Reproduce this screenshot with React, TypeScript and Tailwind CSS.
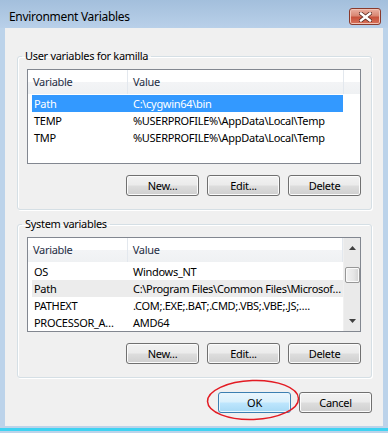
import type { ReactNode } from "react";
import clsx from "clsx";

const FONT = "font-['Segoe_UI','Noto_Sans',sans-serif]";

type Row = { name: string; value: string; state?: "selected" | "hover" };

const USER_VARS: Row[] = [
  { name: "Path", value: "C:\\cygwin64\\bin", state: "selected" },
  { name: "TEMP", value: "%USERPROFILE%\\AppData\\Local\\Temp" },
  { name: "TMP", value: "%USERPROFILE%\\AppData\\Local\\Temp" },
];

const SYSTEM_VARS: Row[] = [
  { name: "OS", value: "Windows_NT" },
  { name: "Path", value: "C:\\Program Files\\Common Files\\Microsof…", state: "hover" },
  { name: "PATHEXT", value: ".COM;.EXE;.BAT;.CMD;.VBS;.VBE;.JS;…." },
  { name: "PROCESSOR_A…", value: "AMD64" },
];

function Button({ children, primary }: { children: ReactNode; primary?: boolean }) {
  return (
    <button
      className={clsx(
        "h-[21px] w-[73px] rounded-[3px] border text-[11px] leading-none tracking-[-0.3px] text-black",
        primary
          ? "border-[#3c7fb1] bg-[linear-gradient(#eaf6fd_0%,#d9f0fc_48%,#bee6fd_52%,#a7d9f5_100%)] shadow-[inset_0_0_0_1px_#e8f6fd]"
          : "border-[#707070] bg-[linear-gradient(#f2f2f2_0%,#ebebeb_48%,#dddddd_52%,#cfcfcf_100%)] shadow-[inset_0_0_0_1px_#fbfbfb]"
      )}
    >
      {children}
    </button>
  );
}

function Arrow({ up }: { up?: boolean }) {
  return (
    <svg width="7" height="4" viewBox="0 0 7 4">
      <path d={up ? "M0 4 L3.5 0 L7 4 Z" : "M0 0 L7 0 L3.5 4 Z"} fill="#404040" />
    </svg>
  );
}

function ListBox({ rows, scroll }: { rows: Row[]; scroll?: boolean }) {
  return (
    <div className="ml-[9px] flex h-[95px] w-[334px] overflow-hidden border border-[#828790] bg-white">
      <div className="flex-1 overflow-hidden">
        <div className="flex h-[24px] items-center bg-[linear-gradient(#ffffff_0%,#ffffff_50%,#f3f4f6_50%,#eff1f3_100%)] text-[11px] tracking-[-0.3px] text-[#1e2d44]">
          <div className="w-[100px] border-r border-[#e3e8ee] pl-[5px] leading-[24px]">Variable</div>
          <div className="w-[216px] border-r border-[#e3e8ee] pl-[5px] leading-[24px]">Value</div>
          <div className="flex-1" />
        </div>
        <div className="mt-[1px]">
          {rows.map((r) => (
            <div
              key={r.name}
              className={clsx(
                "ml-[4px] flex h-[17px] w-[311px] items-center whitespace-nowrap text-[11px] leading-[17px] tracking-[-0.3px]",
                r.state === "selected" && "bg-[#3399ff] text-white",
                r.state === "hover" && "bg-[#ececec] text-black",
                !r.state && "text-black"
              )}
            >
              <div className="w-[99px] overflow-hidden pl-[2px]">{r.name}</div>
              <div className="flex-1 overflow-hidden pl-[2px]">{r.value}</div>
            </div>
          ))}
        </div>
      </div>
      {scroll && (
        <div className="flex w-[17px] flex-col items-center border-l border-[#f0f0f0] bg-[#eaeaea]">
          <div className="flex h-[17px] w-full items-center justify-center pt-[2px]">
            <Arrow up />
          </div>
          <div className="mt-[12px] h-[16px] w-[15px] rounded-[2px] border border-[#979797] bg-[linear-gradient(90deg,#f2f2f2,#e6e6e6_60%,#d2d2d2)] shadow-[inset_0_0_0_1px_#fafafa]" />
          <div className="flex-1" />
          <div className="flex h-[17px] w-full items-center justify-center pb-[3px]">
            <Arrow />
          </div>
        </div>
      )}
    </div>
  );
}

function GroupBox({ title, rows, scroll, className }: { title: string; rows: Row[]; scroll?: boolean; className?: string }) {
  return (
    <fieldset
      className={clsx(
        "w-[355px] rounded-[3px] border border-[#d5dfe5] pb-[13px] shadow-[inset_1px_1px_0_#ffffff,1px_1px_0_#ffffff]",
        className
      )}
    >
      <legend className="ml-[4px] px-[3px] text-[11px] leading-[16px] tracking-[-0.3px] text-black">{title}</legend>
      <div className="mt-[5px]">
        <ListBox rows={rows} scroll={scroll} />
      </div>
      <div className="mt-[11px] flex justify-end gap-[8px] pr-[10px]">
        <Button>New...</Button>
        <Button>Edit...</Button>
        <Button>Delete</Button>
      </div>
    </fieldset>
  );
}

export default function App() {
  return (
    <div className={clsx("flex h-[433px] w-[388px] flex-col bg-[#bcd3ea]", FONT)}>
      {/* title bar */}
      <div className="flex h-[28px] items-start justify-between bg-[linear-gradient(#a3bfdc,#b9d0e9)] pl-[9px] pr-[7px]">
        <div className="pt-[9px] text-[12px] leading-[16px] tracking-[-0.3px] text-black">Environment Variables</div>
        <button className="mt-[8px] flex h-[17px] w-[32px] items-center justify-center rounded-[3px] border border-[#8a3a2c] bg-[linear-gradient(#eab0a2_0%,#d98773_45%,#c7513b_55%,#d8735c_100%)] shadow-[inset_0_0_0_1px_#f0c3b6]">
          <svg width="13" height="10" viewBox="0 0 13 10">
            <path d="M2 1.5 L11 8.5 M11 1.5 L2 8.5" stroke="#5a2a20" strokeWidth="4" strokeLinecap="square" />
            <path d="M2 1.5 L11 8.5 M11 1.5 L2 8.5" stroke="#ffffff" strokeWidth="2.4" strokeLinecap="square" />
          </svg>
        </button>
      </div>

      {/* client area */}
      <div className="relative mx-[5px] flex h-[398px] flex-col bg-[#f0f0f0] pl-[12px] pt-[20px]">
        <GroupBox title="User variables for kamilla" rows={USER_VARS} />
        <GroupBox title="System variables" rows={SYSTEM_VARS} scroll className="mt-[6px]" />
        <div className="mt-[14px] flex w-[355px] justify-end gap-[8px]">
          <Button primary>OK</Button>
          <Button>Cancel</Button>
        </div>
        <svg className="absolute left-[201px] top-[351px]" width="94" height="42" viewBox="0 0 94 42">
          <ellipse cx="47" cy="21" rx="45.5" ry="19.5" fill="none" stroke="#e31b23" strokeWidth="1.5" transform="rotate(-2 47 21)" />
        </svg>
      </div>
      <div className="h-[2px]" />
      <div className="h-[3px] bg-[#3fd3f2]" />
    </div>
  );
}
